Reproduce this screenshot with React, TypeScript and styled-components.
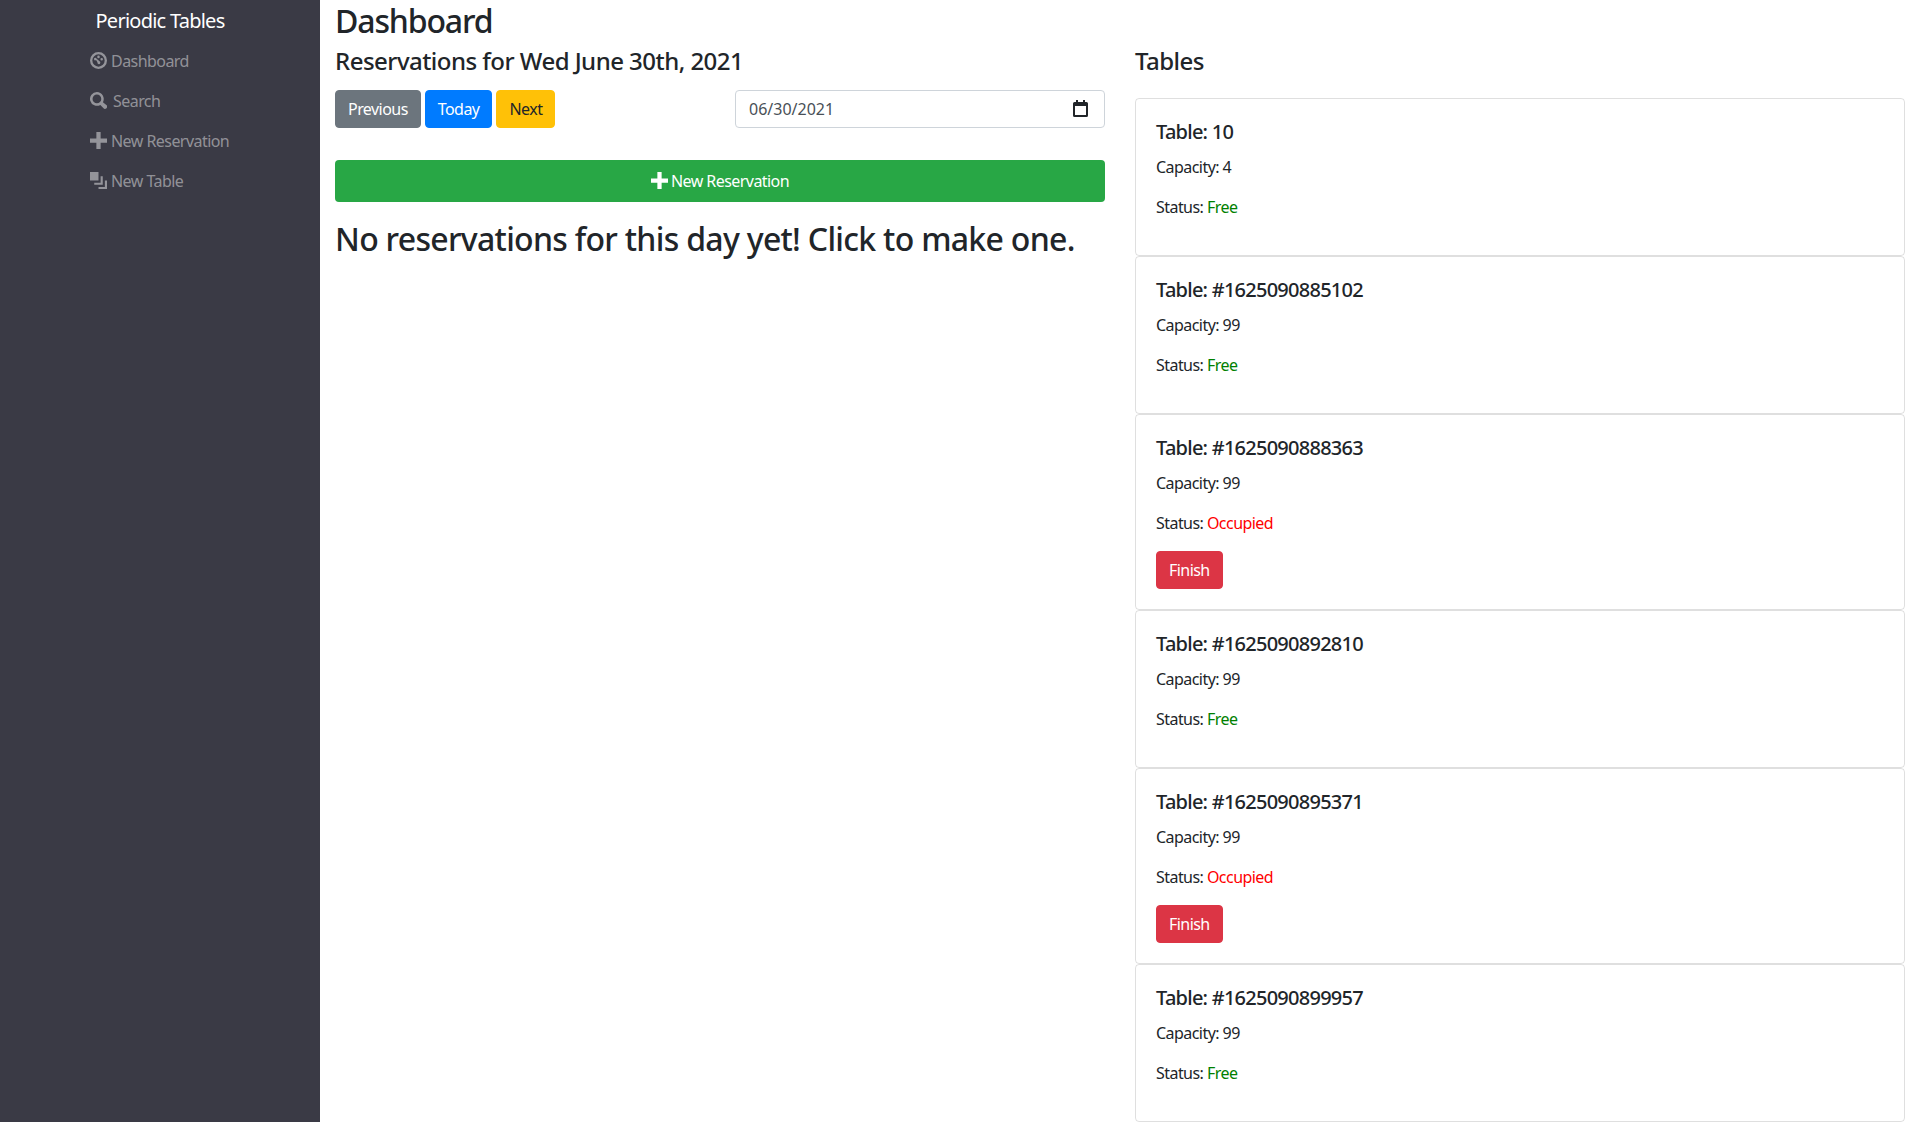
import styled, { createGlobalStyle } from 'styled-components';

const GlobalStyle = createGlobalStyle`
  html, body { margin: 0; padding: 0; background: #fff; }
  body {
    font-family: "Noto Sans", "Open Sans", sans-serif;
    font-size: 16px;
    line-height: 1.5;
    color: #212529;
    letter-spacing: -0.55px;
  }
  * { box-sizing: border-box; }
`;

const Page = styled.div`
  display: flex;
  height: 1122px;
  overflow: hidden;
`;

const Sidebar = styled.nav`
  width: 320px;
  flex: none;
  background: #3a3a45;
  padding-left: 90px;
`;

const Brand = styled.div`
  font-size: 20px;
  line-height: 30px;
  height: 41px;
  padding: 6px 0 0 5.5px;
  color: #fff;
  letter-spacing: -0.75px;
`;

const NavItem = styled.a<{ $gap?: number }>`
  display: flex;
  align-items: center;
  height: 40px;
  gap: ${(p) => p.$gap ?? 4}px;
  color: rgba(255, 255, 255, 0.46);
  svg { width: 17px; height: 17px; fill: currentColor; flex: none; margin-top: -2px; }
`;

const Main = styled.main`
  flex: 1;
  min-width: 0;
  display: grid;
  grid-template-columns: 1fr 1fr;
  align-items: start;
`;

const Column = styled.section`
  padding: 0 15px;
`;

const PageTitle = styled.h1`
  margin: 0 0 6px;
  padding-top: 2px;
  font-size: 32px;
  line-height: 38.4px;
  font-weight: 500;
  letter-spacing: -1.15px;
`;

const SectionTitle = styled.h4<{ $top?: number; $bottom: number }>`
  margin: ${(p) => p.$top ?? 0}px 0 ${(p) => p.$bottom - 1}px;
  padding-top: 1px;
  font-size: 24px;
  line-height: 28.8px;
  font-weight: 500;
  letter-spacing: -0.53px;
`;

const Controls = styled.div`
  display: flex;
  justify-content: space-between;
  margin-bottom: 32px;
`;

const ButtonGroup = styled.div`
  display: flex;
  gap: 4px;
`;

const Button = styled.button<{ $bg: string; $fg?: string }>`
  height: 38px;
  padding: 0 12px;
  border: 1px solid ${(p) => p.$bg};
  border-radius: 4px;
  background: ${(p) => p.$bg};
  color: ${(p) => p.$fg ?? '#fff'};
  font: inherit;
  letter-spacing: inherit;
`;

const DateField = styled.div`
  width: 370px;
  height: 38px;
  padding: 0 16px 0 13px;
  display: flex;
  align-items: center;
  justify-content: space-between;
  border: 1px solid #ced4da;
  border-radius: 4px;
  color: #495057;
  letter-spacing: 0;
  svg { width: 15px; height: 17px; color: #212529; margin-top: -2px; }
`;

const WideButton = styled.a`
  height: 42px;
  display: flex;
  align-items: center;
  justify-content: center;
  gap: 3px;
  border-radius: 4px;
  background: #28a745;
  color: #fff;
  svg { width: 17px; height: 17px; fill: currentColor; margin-top: -1px; }
`;

const EmptyNote = styled.h3`
  margin: 18px 0 0;
  font-size: 32px;
  line-height: 38.4px;
  font-weight: 500;
  letter-spacing: -0.7px;
`;

const Card = styled.article`
  border: 1px solid rgba(0, 0, 0, 0.125);
  border-radius: 4px;
  padding: 20px;
`;

const CardTitle = styled.h5`
  margin: 0 0 11px;
  padding-top: 1px;
  font-size: 20px;
  line-height: 24px;
  font-weight: 500;
  letter-spacing: -0.75px;
`;

const CardText = styled.p`
  margin: 0 0 16px;
`;

const Status = styled.span<{ $free: boolean }>`
  color: ${(p) => (p.$free ? 'green' : 'red')};
`;

const DashboardIcon = () => (
  <svg viewBox="0 0 8 8">
    <path d="M4 0a4 4 0 1 0 0 8 4 4 0 0 0 0-8zm0 1.100a2.900 2.900 0 1 1 0 5.800 2.900 2.900 0 0 1 0-5.800z" fillRule="evenodd" />
    <path d="M4 1.700a.6.6 0 1 0 0 1.200.6.6 0 0 0 0-1.200zM2.500 2.700a.6.6 0 1 0 .35 1.080L3.500 4.800a.7.7 0 1 0 1-.4L3.100 3.200a.6.6 0 0 0-.6-.5zm3 .1a.6.6 0 1 0 0 1.200.6.6 0 0 0 0-1.200z" />
  </svg>
);

const SearchIcon = () => (
  <svg viewBox="0 0 8 8">
    <path d="M3.250 0a3.250 3.250 0 1 0 1.620 6.070l1.400 1.430a1 1 0 1 0 1.400-1.400L6.080 4.800A3.250 3.250 0 0 0 3.250 0zm0 1.200a2.050 2.050 0 1 1 0 4.100 2.050 2.050 0 0 1 0-4.100z" fillRule="evenodd" />
  </svg>
);

const PlusIcon = () => (
  <svg viewBox="0 0 8 8">
    <path d="M3 0v3H0v2h3v3h2V5h3V3H5V0H3z" />
  </svg>
);

const LayersIcon = () => (
  <svg viewBox="0 0 8 8">
    <path d="M0 0v4h4V0H0zm5 2v3H2v1h4V2H5zm2 2v3H4v1h4V4H7z" />
  </svg>
);

const CalendarIcon = () => (
  <svg viewBox="0 0 15 17">
    <path d="M3 0h2v2h5V0h2v2h1.500A1.500 1.500 0 0 1 15 3.500v12a1.500 1.500 0 0 1-1.500 1.500h-12A1.500 1.500 0 0 1 0 15.500v-12A1.500 1.500 0 0 1 1.500 2H3V0zM2 6v9h11V6H2z" fill="currentColor" fillRule="evenodd" />
  </svg>
);

const tables = [
  { name: '10', capacity: 4, free: true },
  { name: '#1625090885102', capacity: 99, free: true },
  { name: '#1625090888363', capacity: 99, free: false },
  { name: '#1625090892810', capacity: 99, free: true },
  { name: '#1625090895371', capacity: 99, free: false },
  { name: '#1625090899957', capacity: 99, free: true },
];

export default function App() {
  return (
    <>
      <GlobalStyle />
      <Page>
        <Sidebar>
          <Brand>Periodic Tables</Brand>
          <NavItem><DashboardIcon />Dashboard</NavItem>
          <NavItem $gap={6}><SearchIcon />Search</NavItem>
          <NavItem><PlusIcon />New Reservation</NavItem>
          <NavItem><LayersIcon />New Table</NavItem>
        </Sidebar>
        <Main>
          <Column>
            <PageTitle>Dashboard</PageTitle>
            <SectionTitle $bottom={15}>Reservations for Wed June 30th, 2021</SectionTitle>
            <Controls>
              <ButtonGroup>
                <Button $bg="#6c757d">Previous</Button>
                <Button $bg="#007bff">Today</Button>
                <Button $bg="#ffc107" $fg="#212529">Next</Button>
              </ButtonGroup>
              <DateField>
                06/30/2021
                <CalendarIcon />
              </DateField>
            </Controls>
            <WideButton><PlusIcon />New Reservation</WideButton>
            <EmptyNote>No reservations for this day yet! Click to make one.</EmptyNote>
          </Column>
          <Column>
            <SectionTitle $top={46.4} $bottom={23}>Tables</SectionTitle>
            {tables.map((table) => (
              <Card key={table.name}>
                <CardTitle>Table: {table.name}</CardTitle>
                <CardText>Capacity: {table.capacity}</CardText>
                <CardText>
                  Status: <Status $free={table.free}>{table.free ? 'Free' : 'Occupied'}</Status>
                </CardText>
                {!table.free && <Button $bg="#dc3545">Finish</Button>}
              </Card>
            ))}
          </Column>
        </Main>
      </Page>
    </>
  );
}
